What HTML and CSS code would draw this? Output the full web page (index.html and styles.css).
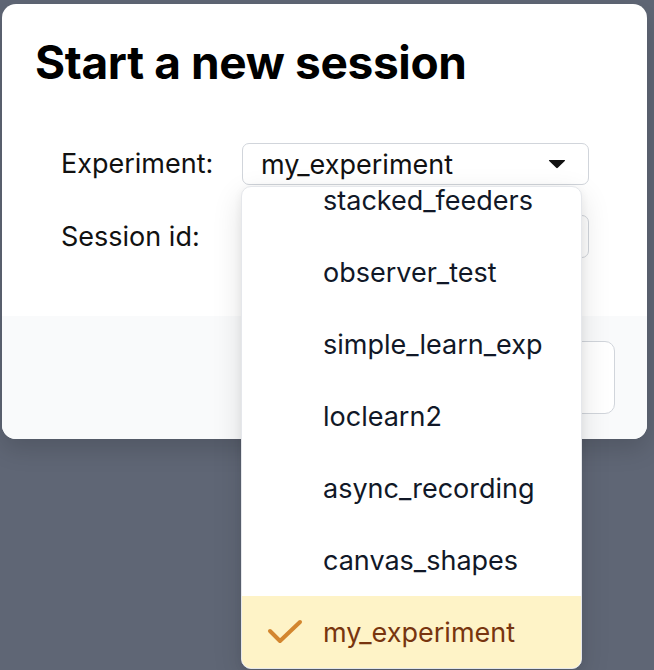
FILE: index.html
```html
<!DOCTYPE html>
<html lang="en">
<head>
<meta charset="utf-8">
<title>Start a new session</title>
<link rel="stylesheet" href="styles.css">
</head>
<body>
<div class="modal">
  <div class="modal-body">
    <h1 class="title">Start a new session</h1>
    <div class="form">
      <label class="label">Experiment:</label>
      <div class="field">
        <div class="select">
          <span>my_experiment</span>
          <svg class="caret" width="18" height="10" viewBox="0 0 18 10"><path d="M1.5 1 H16.5 Q17.6 1 16.8 1.9 L9.8 8.8 Q9 9.6 8.2 8.8 L1.2 1.9 Q0.4 1 1.5 1 Z" fill="#111"/></svg>
        </div>
        <div class="listbox">
          <ul class="options">
            <li class="option">stacked_feeders</li>
            <li class="option">observer_test</li>
            <li class="option">simple_learn_exp</li>
            <li class="option">loclearn2</li>
            <li class="option">async_recording</li>
            <li class="option">canvas_shapes</li>
            <li class="option selected">
              <svg class="check" width="36" height="26" viewBox="0 0 36 26"><path d="M3 12 L13 22 L33 3" fill="none" stroke="#d3862f" stroke-width="4" stroke-linecap="round" stroke-linejoin="round"/></svg>
              my_experiment
            </li>
          </ul>
        </div>
      </div>
      <label class="label">Session id:</label>
      <div class="field">
        <div class="input"></div>
      </div>
    </div>
  </div>
  <div class="modal-footer">
    <button class="btn">Cancel</button>
  </div>
</div>
</body>
</html>
```

FILE: styles.css
```css
* { box-sizing: border-box; }
html, body { margin: 0; padding: 0; }
body {
  background: #5f6675;
  width: 654px;
  height: 670px;
  overflow: hidden;
  font-family: Inter, "Helvetica Neue", Arial, sans-serif;
  color: #111;
}
.modal {
  margin: 4px 0 0 2px;
  width: 645px;
  height: 435px;
  background: #fff;
  border-radius: 14px;
  overflow: visible;
  display: flex;
  flex-direction: column;
  box-shadow: 0 10px 25px rgba(0,0,0,0.15);
}
.modal-body {
  height: 312px;
  padding: 31px 0 0 33px;
  border-radius: 14px 14px 0 0;
}
.title {
  margin: 0;
  font-size: 46px;
  font-weight: 700;
  line-height: 54px;
  letter-spacing: -0.35px;
  color: #000;
}
.form {
  margin-top: 54px;
  margin-left: 26px;
  display: grid;
  grid-template-columns: 181px 347px;
  row-gap: 30px;
  align-items: center;
}
.label {
  font-size: 27px;
  color: #111;
  line-height: 42px;
}
.field { position: relative; }
.select {
  height: 42px;
  border: 1px solid #d1d5db;
  border-radius: 7px;
  display: flex;
  align-items: center;
  justify-content: space-between;
  padding: 0 22px 0 18px;
  font-size: 27px;
  color: #111;
}
.caret { display: block; }
.input {
  height: 43px;
  border: 1px solid #d1d5db;
  border-radius: 7px;
}
.listbox {
  position: absolute;
  top: 43px;
  left: -1px;
  width: 341px;
  height: 483px;
  background: #fff;
  border: 1px solid #e5e7eb;
  border-radius: 10px;
  overflow: hidden;
  z-index: 10;
  box-shadow: 0 10px 30px rgba(0,0,0,0.12), 0 2px 8px rgba(0,0,0,0.06);
}
.options {
  list-style: none;
  margin: -23px 0 0 0;
  padding: 0;
}
.option {
  position: relative;
  height: 72px;
  display: flex;
  align-items: center;
  padding-left: 81px;
  font-size: 27px;
  color: #111827;
}
.option.selected {
  background: #fef3c7;
  color: #78350f;
}
.check {
  position: absolute;
  left: 25px;
  top: 23px;
}
.modal-footer {
  flex: 1;
  background: #f9fafb;
  border-radius: 0 0 14px 14px;
  display: flex;
  justify-content: flex-end;
  align-items: flex-start;
  padding: 25px 32px 0 0;
}
.btn {
  height: 73px;
  width: 140px;
  background: #fff;
  border: 1px solid #d1d5db;
  border-radius: 10px;
  font-family: inherit;
  font-size: 22px;
  color: #374151;
}
```
